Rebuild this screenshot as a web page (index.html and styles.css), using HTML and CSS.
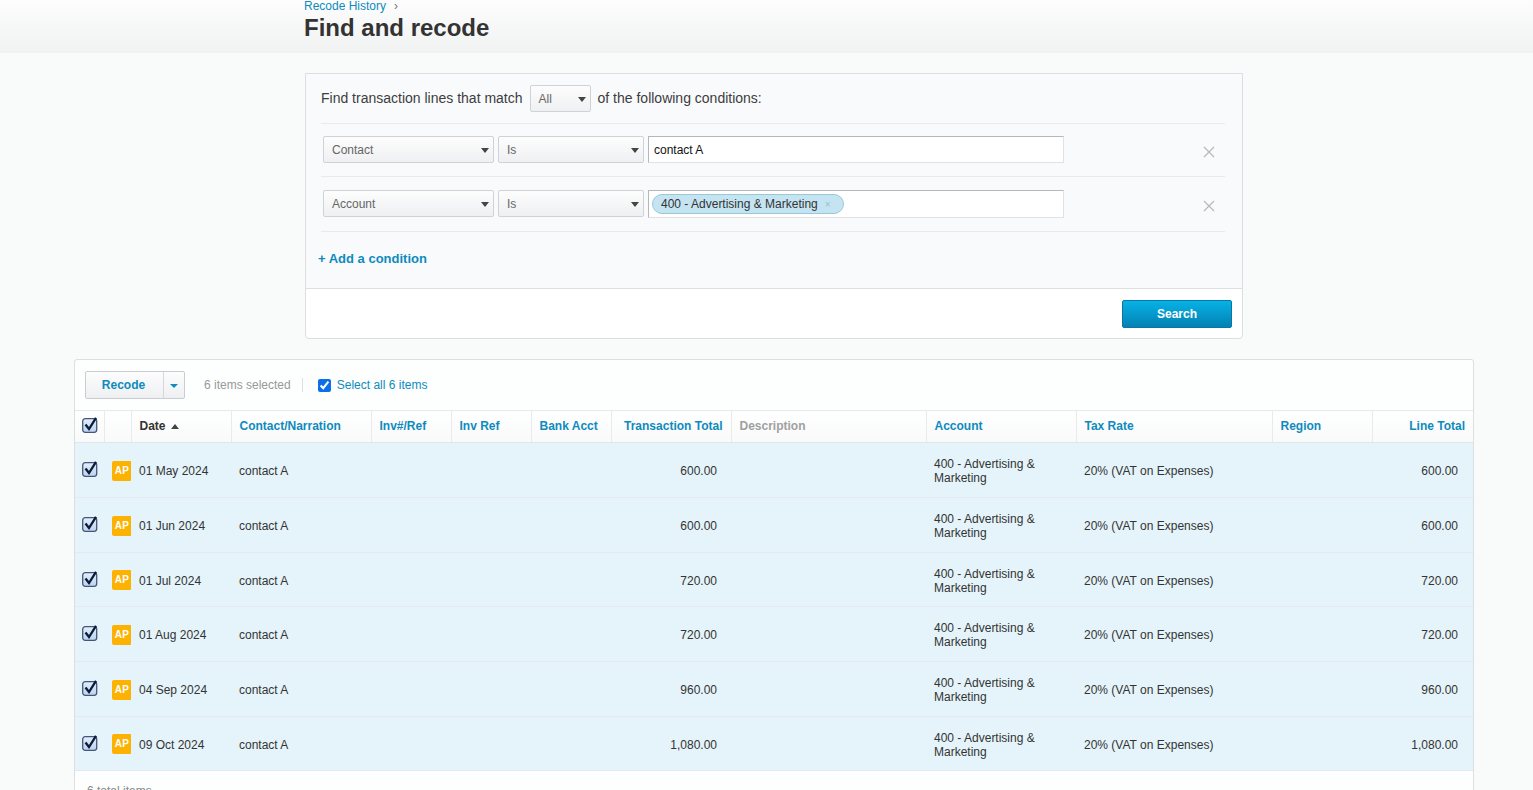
FILE: index.html
```html
<!DOCTYPE html>
<html lang="en">
<head>
    <meta charset="UTF-8">
    <title>Find and recode</title>
    <link rel="stylesheet" href="styles.css">
</head>
<body>
    <svg class="sprites" width="0" height="0">
        <defs>
            <linearGradient id="box-fill" x1="0" y1="0" x2="0" y2="1">
                <stop offset="0" stop-color="#e4eefb"/>
                <stop offset="1" stop-color="#bcd3ee"/>
            </linearGradient>
        </defs>
        <symbol id="tick-box" viewBox="0 0 16 16">
            <rect x="0.7" y="1.7" width="14" height="13.6" rx="2.5" fill="url(#box-fill)" stroke="#46567a" stroke-width="1.3"/>
            <path d="M3.5 7.5 L7 12 L14 0.8" fill="none" stroke="#0b1c3a" stroke-width="2.3"/>
        </symbol>
    </svg>

    <div class="page-header">
        <div class="crumbs"><a>Recode History</a><span class="crumb-sep">›</span></div>
        <h1>Find and recode</h1>
    </div>

    <div class="search-panel">
        <div class="search-body">
            <div class="match-line">
                <span>Find transaction lines that match</span>
                <div class="select select-all">All</div>
                <span>of the following conditions:</span>
            </div>
            <div class="condition">
                <div class="select select-field">Contact</div>
                <div class="select select-op">Is</div>
                <div class="value-input">contact A</div>
                <svg class="remove" width="12" height="12" viewBox="0 0 12 12"><path d="M1 1 L11 11 M11 1 L1 11" stroke="#b4b8bf" stroke-width="1.2"/></svg>
            </div>
            <div class="condition condition-tall">
                <div class="select select-field">Account</div>
                <div class="select select-op">Is</div>
                <div class="value-input">
                    <span class="token">400 - Advertising &amp; Marketing<span class="token-x">×</span></span>
                </div>
                <svg class="remove" width="12" height="12" viewBox="0 0 12 12"><path d="M1 1 L11 11 M11 1 L1 11" stroke="#b4b8bf" stroke-width="1.2"/></svg>
            </div>
            <a class="add-condition">+ Add a condition</a>
        </div>
        <div class="search-footer">
            <button class="btn-search">Search</button>
        </div>
    </div>

    <div class="results">
        <div class="toolbar">
            <div class="split-btn">
                <button class="split-main">Recode</button>
                <button class="split-caret"><span class="caret"></span></button>
            </div>
            <span class="selected-count">6 items selected</span>
            <label class="select-all-items">
                <input type="checkbox" checked>
                <span>Select all 6 items</span>
            </label>
        </div>

        <table class="lines">
            <colgroup>
                <col class="c-check"><col class="c-type"><col class="c-date"><col class="c-contact">
                <col class="c-ref"><col class="c-ref"><col class="c-ref"><col class="c-total">
                <col class="c-desc"><col class="c-account"><col class="c-tax"><col class="c-region"><col class="c-line">
            </colgroup>
            <thead>
                <tr>
                    <th class="check"><svg width="16" height="16"><use href="#tick-box"/></svg></th>
                    <th></th>
                    <th class="sorted">Date <span class="sort-up"></span></th>
                    <th>Contact/Narration</th>
                    <th>Inv#/Ref</th>
                    <th>Inv Ref</th>
                    <th>Bank Acct</th>
                    <th class="num">Transaction Total</th>
                    <th class="muted">Description</th>
                    <th>Account</th>
                    <th>Tax Rate</th>
                    <th>Region</th>
                    <th class="num">Line Total</th>
                </tr>
            </thead>
            <tbody>
                <tr>
                    <td class="check"><svg width="16" height="16"><use href="#tick-box"/></svg></td>
                    <td class="type"><span class="badge">AP</span></td>
                    <td>01 May 2024</td>
                    <td>contact A</td>
                    <td></td><td></td><td></td>
                    <td class="num txn">600.00</td>
                    <td></td>
                    <td>400 - Advertising &amp; Marketing</td>
                    <td>20% (VAT on Expenses)</td>
                    <td></td>
                    <td class="num">600.00</td>
                </tr>
                <tr>
                    <td class="check"><svg width="16" height="16"><use href="#tick-box"/></svg></td>
                    <td class="type"><span class="badge">AP</span></td>
                    <td>01 Jun 2024</td>
                    <td>contact A</td>
                    <td></td><td></td><td></td>
                    <td class="num txn">600.00</td>
                    <td></td>
                    <td>400 - Advertising &amp; Marketing</td>
                    <td>20% (VAT on Expenses)</td>
                    <td></td>
                    <td class="num">600.00</td>
                </tr>
                <tr class="short">
                    <td class="check"><svg width="16" height="16"><use href="#tick-box"/></svg></td>
                    <td class="type"><span class="badge">AP</span></td>
                    <td>01 Jul 2024</td>
                    <td>contact A</td>
                    <td></td><td></td><td></td>
                    <td class="num txn">720.00</td>
                    <td></td>
                    <td>400 - Advertising &amp; Marketing</td>
                    <td>20% (VAT on Expenses)</td>
                    <td></td>
                    <td class="num">720.00</td>
                </tr>
                <tr>
                    <td class="check"><svg width="16" height="16"><use href="#tick-box"/></svg></td>
                    <td class="type"><span class="badge">AP</span></td>
                    <td>01 Aug 2024</td>
                    <td>contact A</td>
                    <td></td><td></td><td></td>
                    <td class="num txn">720.00</td>
                    <td></td>
                    <td>400 - Advertising &amp; Marketing</td>
                    <td>20% (VAT on Expenses)</td>
                    <td></td>
                    <td class="num">720.00</td>
                </tr>
                <tr>
                    <td class="check"><svg width="16" height="16"><use href="#tick-box"/></svg></td>
                    <td class="type"><span class="badge">AP</span></td>
                    <td>04 Sep 2024</td>
                    <td>contact A</td>
                    <td></td><td></td><td></td>
                    <td class="num txn">960.00</td>
                    <td></td>
                    <td>400 - Advertising &amp; Marketing</td>
                    <td>20% (VAT on Expenses)</td>
                    <td></td>
                    <td class="num">960.00</td>
                </tr>
                <tr class="short">
                    <td class="check"><svg width="16" height="16"><use href="#tick-box"/></svg></td>
                    <td class="type"><span class="badge">AP</span></td>
                    <td>09 Oct 2024</td>
                    <td>contact A</td>
                    <td></td><td></td><td></td>
                    <td class="num txn">1,080.00</td>
                    <td></td>
                    <td>400 - Advertising &amp; Marketing</td>
                    <td>20% (VAT on Expenses)</td>
                    <td></td>
                    <td class="num">1,080.00</td>
                </tr>
            </tbody>
        </table>
        <div class="total-items">6 total items</div>
    </div>
</body>
</html>
```

FILE: styles.css
```css
html, body {
    height: 790px;
    overflow: hidden;
}

body {
    margin: 0;
    font-family: "Liberation Sans", Arial, sans-serif;
    font-size: 12px;
    color: #333;
    background-color: #f9fbfb;
}

.sprites {
    position: absolute;
}

/* Header */
.page-header {
    height: 53px;
    padding-left: 304px;
    background: linear-gradient(#fdfdfd, #f1f2f2);
    box-sizing: border-box;
    border-bottom: 1px solid #f0f1f1;
}

.crumbs {
    height: 12px;
    line-height: 12px;
    color: #0e8bbd;
}

.crumb-sep {
    margin-left: 8px;
    color: #777;
}

.page-header h1 {
    margin: 2px 0 0;
    font-size: 24px;
    line-height: 28px;
    font-weight: bold;
    color: #333;
}

/* Search panel */
.search-panel {
    width: 938px;
    height: 266px;
    margin: 20px 0 0 305px;
    box-sizing: border-box;
    border: 1px solid #dcdedf;
    border-radius: 0 0 4px 4px;
    background: #fff;
}

.search-body {
    height: 215px;
    box-sizing: border-box;
    padding: 0 17px 0 15px;
    background: #f9fafc;
    border-bottom: 1px solid #dcdedf;
}

.match-line {
    display: flex;
    align-items: center;
    gap: 7px;
    height: 50px;
    font-size: 14px;
    color: #3d3d3d;
    border-bottom: 1px solid #e8eaec;
    box-sizing: border-box;
}

.match-line span {
    margin-bottom: 2px;
}

.select {
    position: relative;
    box-sizing: border-box;
    height: 27px;
    line-height: 26px;
    padding-left: 8px;
    font-size: 12px;
    color: #666;
    border: 1px solid #cfd2d6;
    border-radius: 2px;
    background: linear-gradient(#fdfdfd, #eff0f2);
}

.select::after {
    content: "";
    position: absolute;
    right: 4px;
    top: 11px;
    border: 4px solid transparent;
    border-top: 5px solid #444;
    border-bottom: 0;
}

.select-all {
    width: 61px;
}

.select-field {
    width: 171px;
}

.select-op {
    width: 146px;
}

.condition {
    position: relative;
    display: flex;
    gap: 4px;
    height: 53px;
    padding: 12px 0 0 2px;
    box-sizing: border-box;
    border-bottom: 1px solid #e8eaec;
}

.condition-tall {
    height: 55px;
    padding-top: 13px;
}

.value-input {
    box-sizing: border-box;
    width: 416px;
    height: 27px;
    line-height: 26px;
    padding-left: 5px;
    color: #111;
    background: #fff;
    border: 1px solid #e0e2e4;
    border-top-color: #b4b8bd;
    border-left-color: #b4b8bd;
}

.condition-tall .value-input {
    height: 28px;
    padding-left: 3px;
}

.token {
    display: inline-block;
    width: 192px;
    height: 20px;
    margin-top: 3px;
    box-sizing: border-box;
    padding-left: 8px;
    line-height: 18px;
    color: #333;
    background: #c4e4f2;
    border: 1px solid #9cc7da;
    border-radius: 10px;
    vertical-align: top;
}

.token-x {
    margin-left: 7px;
    color: #9dbccb;
    font-size: 10px;
}

.remove {
    position: absolute;
    right: 10px;
    top: 22px;
}

.condition-tall .remove {
    top: 23px;
}

.add-condition {
    display: block;
    margin: 19px 0 0 -3px;
    font-size: 13px;
    font-weight: bold;
    color: #0e8bbd;
}

.search-footer {
    display: flex;
    justify-content: flex-end;
    padding: 11px 10px 0 0;
}

.btn-search {
    width: 110px;
    height: 28px;
    padding: 0;
    font-family: inherit;
    font-size: 12px;
    font-weight: bold;
    color: #fff;
    border: 1px solid #0a76a6;
    border-radius: 2px;
    background: linear-gradient(#06b2e6, #0481b2);
}

/* Results */
.results {
    width: 1400px;
    height: 440px;
    margin: 20px 0 0 74px;
    box-sizing: border-box;
    border: 1px solid #dcdedf;
    border-radius: 3px 3px 0 0;
    background: #fdfefe;
}

.toolbar {
    display: flex;
    align-items: center;
    height: 50px;
    padding-left: 10px;
    box-sizing: border-box;
}

.split-btn {
    display: flex;
    height: 28px;
    border: 1px solid #c9ccd0;
    border-radius: 2px;
    background: linear-gradient(#fdfdfd, #eef0f1);
    box-sizing: border-box;
    width: 100px;
}

.split-btn button {
    padding: 0;
    border: 0;
    background: none;
    font-family: inherit;
}

.split-main {
    width: 78px;
    padding-right: 2px !important;
    font-size: 12px;
    font-weight: bold;
    color: #0e8bbd;
    border-right: 1px solid #d5d8db !important;
}

.split-caret {
    flex: 1;
}

.caret {
    display: inline-block;
    border: 4px solid transparent;
    border-top: 4px solid #0e8bbd;
    border-bottom: 0;
    vertical-align: middle;
}

.selected-count {
    margin-left: 19px;
    padding-right: 11px;
    color: #999;
    border-right: 1px solid #dddfe0;
    line-height: 14px;
}

.select-all-items {
    display: flex;
    align-items: center;
    margin-left: 15px;
    color: #0e8bbd;
}

.select-all-items input {
    width: 13px;
    height: 13px;
    margin: 0 6px 0 0;
    accent-color: #0b6fe8;
}

.lines {
    width: 1398px;
    table-layout: fixed;
    border-collapse: collapse;
}

.c-check { width: 29px; }
.c-type { width: 27px; }
.c-date { width: 100px; }
.c-contact { width: 140px; }
.c-ref { width: 80px; }
.c-total { width: 120px; }
.c-desc { width: 195px; }
.c-account { width: 150px; }
.c-tax { width: 196px; }
.c-region { width: 100px; }
.c-line { width: 101px; }

.lines th {
    height: 32px;
    padding: 0 8px 2px;
    box-sizing: border-box;
    text-align: left;
    font-size: 12px;
    font-weight: bold;
    color: #0e8bbd;
    background: linear-gradient(#fff, #f8f9f9);
    border-top: 1px solid #e8eaec;
    border-bottom: 1px solid #e3e6e8;
    border-left: 1px solid #e8eaec;
}

.lines th:first-child {
    border-left: 0;
}

.lines th.sorted {
    color: #333;
}

.lines th.muted {
    color: #a0a0a0;
}

.lines th.num {
    text-align: right;
}

.sort-up {
    display: inline-block;
    margin-left: 2px;
    border: 4px solid transparent;
    border-bottom: 5px solid #444;
    border-top: 0;
    vertical-align: 1px;
}

.lines td {
    height: 55px;
    padding: 2px 8px 0;
    box-sizing: border-box;
    line-height: 14px;
    background: #e5f4fa;
    border-bottom: 1px solid #e3e9ec;
}

.lines .short td {
    height: 54px;
}

.lines td.num {
    padding-right: 15px;
    text-align: right;
}

.lines td.txn {
    padding-right: 14px;
}

.lines .check {
    padding: 0 0 0 7px;
}

.lines th.check svg {
    display: block;
    margin-bottom: 3px;
}

.lines td.check svg {
    display: block;
    margin-bottom: 2px;
}

.lines td.type {
    padding: 1px 0 0 8px;
}

.badge {
    display: block;
    width: 20px;
    height: 20px;
    line-height: 20px;
    text-align: center;
    font-size: 10px;
    font-weight: bold;
    letter-spacing: 0.3px;
    color: #fff;
    background: #fdb100;
    border-radius: 2px;
}

.total-items {
    padding: 13px 12px;
    color: #888;
}
```
